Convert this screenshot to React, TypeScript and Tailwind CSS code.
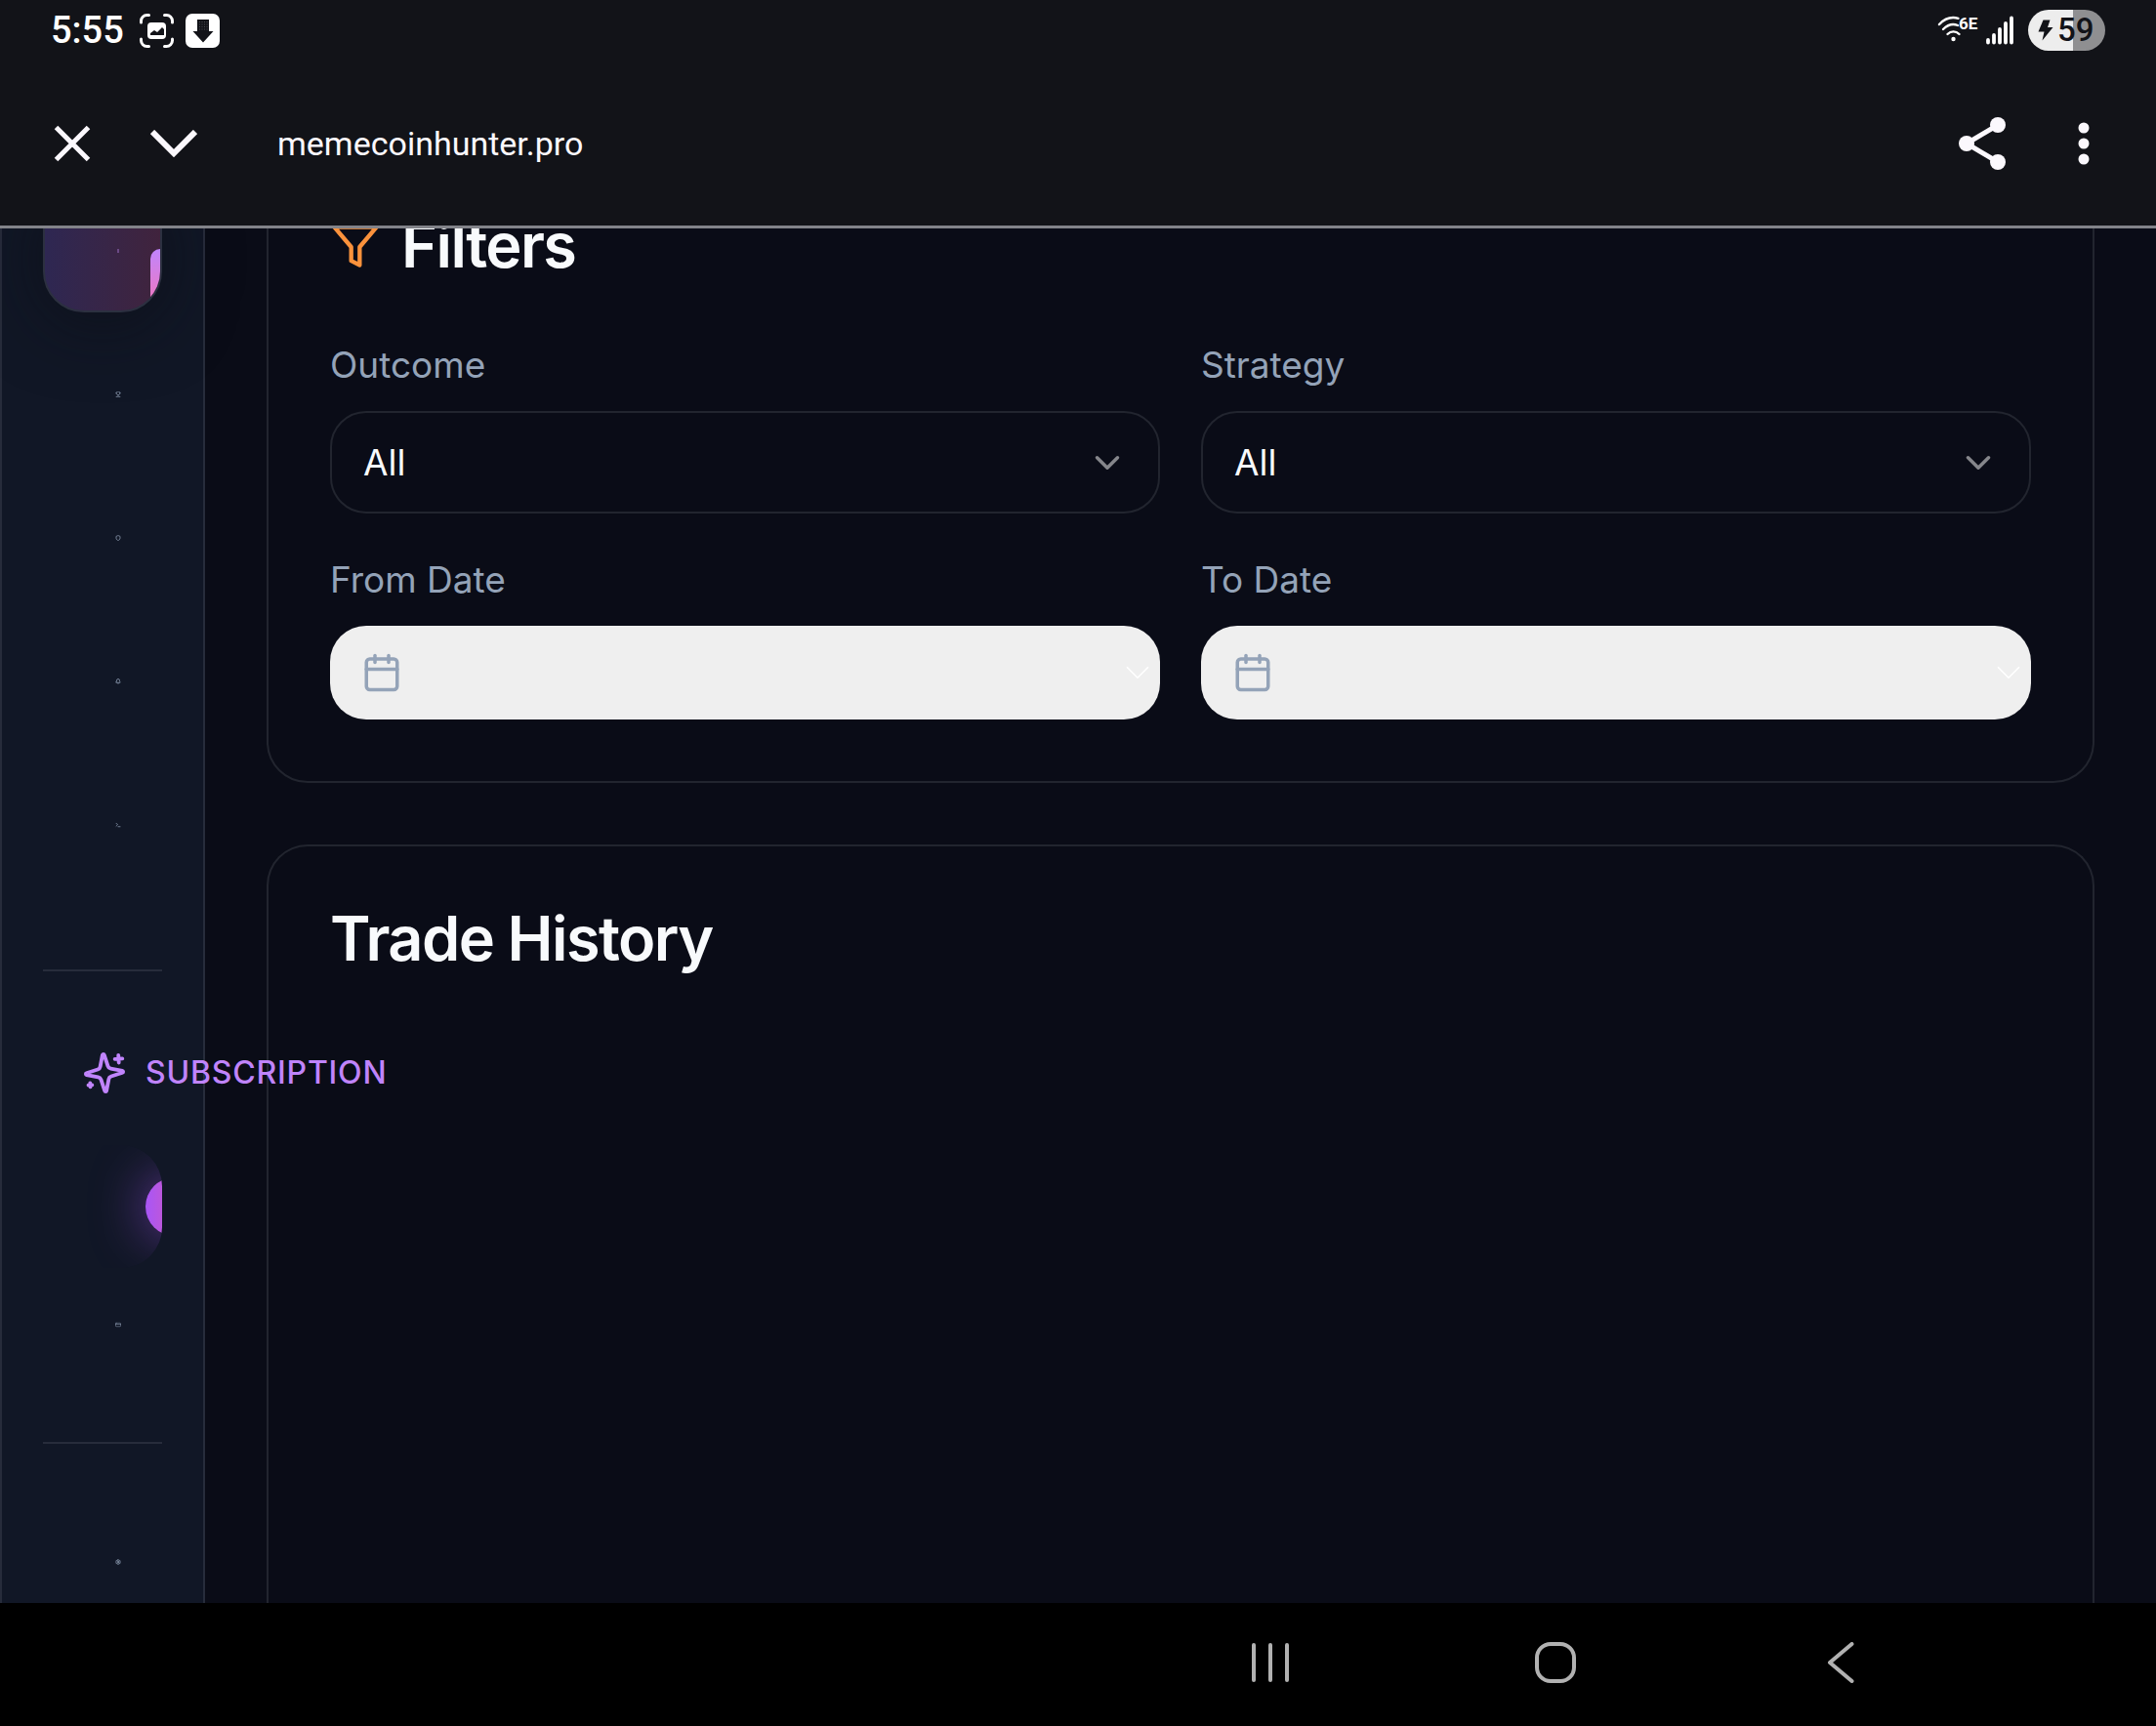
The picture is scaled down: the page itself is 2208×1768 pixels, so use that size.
import type { ReactNode } from "react";
import {
  Bell,
  Calendar,
  ChevronDown,
  CreditCard,
  Settings,
  Shield,
  Terminal,
  Trophy,
} from "lucide-react";

function StatusBar() {
  return (
    <div className="flex h-[62px] items-center justify-between px-[52px] text-white">
      <div className="flex items-center">
        <span className="w-[91px] font-[Roboto,sans-serif] text-[38px] leading-[60px] font-medium">5:55</span>
        <svg className="size-[35px]" viewBox="0 0 35 35" aria-hidden="true">
          <g fill="none" stroke="#fff" strokeWidth="3" strokeLinecap="round">
            <path d="M1.500 9V7.500a6 6 0 0 1 6-6H9.500M25.500 1.500H27.500a6 6 0 0 1 6 6V9M33.500 26v1.500a6 6 0 0 1-6 6H25.500M9.500 33.500H7.500a6 6 0 0 1-6-6V26" />
          </g>
          <rect x="8" y="9" width="19" height="17" rx="4" fill="#fff" />
          <path d="M11 22v-2l4-3 3 2 5-5 2 2v6z" fill="#121318" />
        </svg>
        <svg className="ml-3 size-[35px]" viewBox="0 0 35 35" aria-hidden="true">
          <rect width="35" height="35" rx="7" fill="#fff" />
          <path d="M12 6h12v12h4.500L18 29.500 7.500 18H12z" fill="#121318" />
          <path d="M14.500 8v10M17 8v10M19.500 8v10M22 8v10" stroke="#4a4b50" strokeWidth="1" strokeDasharray="1 1.500" />
        </svg>
      </div>
      <div className="flex items-center">
        <svg className="h-[32px] w-[44px]" viewBox="0 0 44 32" aria-hidden="true">
          <g fill="none" stroke="#fff" strokeWidth="2.400" strokeLinecap="round">
            <path d="M2 10C8 3.500 15 2 21.500 3.800" />
            <path d="M6 15c5-5 10-6 15-4" />
            <path d="M10.500 20c3.500-3.500 8.500-3.500 12 0" />
          </g>
          <circle cx="16.500" cy="25" r="2.200" fill="#fff" />
          <text x="22" y="15" fill="#fff" fontFamily="Roboto, sans-serif" fontSize="17" fontWeight="700">6E</text>
        </svg>
        <svg className="ml-[6px] h-[30px] w-[28px]" viewBox="0 0 28 30" aria-hidden="true">
          <g stroke="#fff" strokeWidth="3.800" strokeLinecap="round">
            <path d="M2 25v2.500M8 20v7.500M14 14v13.500M20 8v19.500M26 2.500v25" />
          </g>
        </svg>
        <div className="ml-[15px] flex h-[42px] w-[79px] items-center rounded-full bg-linear-to-r from-[#ededed] from-58% to-[#8f8f91] to-58% pl-[10px] text-[#121318]">
          <svg className="h-[22px] w-[16px]" viewBox="0 0 16 22" aria-hidden="true">
            <path d="M5.500 0.500h7L10 8h5.500L4.500 21.500 6.500 12.500H0.500z" fill="#121318" />
          </svg>
          <span className="ml-1 font-[Roboto,sans-serif] text-[33px] leading-[42px] font-medium">59</span>
        </div>
      </div>
    </div>
  );
}

function BrowserBar() {
  return (
    <header className="shrink-0 border-b-[3px] border-[#828389] bg-[#121318]">
      <StatusBar />
      <div className="flex h-[169px] items-center px-[50px] text-[#fbf8fd]">
        <button type="button" aria-label="Close" className="flex size-12 items-center justify-center">
          <svg className="size-[38px]" viewBox="0 0 38 38" aria-hidden="true">
            <path d="M2.500 2.500l33 33M35.500 2.500l-33 33" stroke="currentColor" strokeWidth="5" />
          </svg>
        </button>
        <button type="button" aria-label="Minimize" className="ml-14 flex size-12 items-center justify-center">
          <svg className="h-[28px] w-[48px]" viewBox="0 0 48 28" aria-hidden="true">
            <path d="M2 2l22 22L46 2" fill="none" stroke="currentColor" strokeWidth="6" />
          </svg>
        </button>
        <span className="ml-[82px] flex-1 font-[Roboto,sans-serif] text-[34px] leading-[48px]">memecoinhunter.pro</span>
        <button type="button" aria-label="Share" className="flex h-14 w-12 items-center justify-center">
          <svg className="h-[54px] w-[48px]" viewBox="0 0 48 54" aria-hidden="true">
            <path d="M40 8L8 27l32 19" fill="none" stroke="currentColor" strokeWidth="5" />
            <circle cx="40" cy="8" r="8" fill="currentColor" />
            <circle cx="8" cy="27" r="8" fill="currentColor" />
            <circle cx="40" cy="46" r="8" fill="currentColor" />
          </svg>
        </button>
        <button type="button" aria-label="More options" className="ml-14 flex size-12 items-center justify-center">
          <svg className="h-[44px] w-[12px]" viewBox="0 0 12 44" aria-hidden="true">
            <circle cx="6" cy="6" r="5.500" fill="currentColor" />
            <circle cx="6" cy="22" r="5.500" fill="currentColor" />
            <circle cx="6" cy="38" r="5.500" fill="currentColor" />
          </svg>
        </button>
      </div>
    </header>
  );
}

function RailLink({ label, children }: { label: string; children: ReactNode }) {
  return (
    <a href="#" aria-label={label} className="flex h-[126px] shrink-0 items-center justify-end pr-[42px] text-[#94a3b8]">
      {children}
    </a>
  );
}

function SparklesIcon() {
  return (
    <svg
      className="size-[46px] shrink-0"
      viewBox="0 0 24 24"
      fill="none"
      stroke="currentColor"
      strokeWidth="2"
      strokeLinecap="round"
      strokeLinejoin="round"
      aria-hidden="true"
    >
      <g transform="rotate(-3.600 12 12)">
        <path d="M9.937 15.500A2 2 0 0 0 8.500 14.063l-6.135-1.582a.5.5 0 0 1 0-.962L8.500 9.936A2 2 0 0 0 9.937 8.500l1.582-6.135a.5.5 0 0 1 .963 0L14.063 8.500A2 2 0 0 0 15.500 9.937l6.135 1.581a.5.5 0 0 1 0 .964L15.500 14.063a2 2 0 0 0-1.437 1.437l-1.582 6.135a.5.5 0 0 1-.963 0z" />
        <path d="M20 3v4M22 5h-4M4 17v2M5 18H3" />
      </g>
    </svg>
  );
}

function Sidebar() {
  return (
    <aside className="relative z-10 flex w-[210px] shrink-0 flex-col border-x-2 border-[#272c3b] bg-[#111726] px-[42px]">
      <nav className="-mt-10 flex shrink-0 flex-col gap-[21px]">
        <a
          href="#"
          aria-label="Trades"
          className="relative flex h-[126px] items-center justify-end overflow-hidden rounded-[42px] border-2 border-[#2c3040] bg-linear-to-r from-[#2e2752] to-[#40233d] pr-[42px] shadow-[0_8px_72px_rgba(12,14,20,0.6)]"
        >
          <span className="h-1 w-[2px] bg-[#6b4a86]" />
          <span className="absolute top-[59px] right-0 h-[63px] w-[10px] rounded-l-[10px] bg-linear-to-b from-[#c084fc] to-[#f472b6]" />
        </a>
        <RailLink label="Leaderboard"><Trophy size={6} /></RailLink>
        <RailLink label="Security"><Shield size={6} strokeWidth={3} /></RailLink>
        <RailLink label="Alerts"><Bell size={6} strokeWidth={3} /></RailLink>
        <RailLink label="Console"><Terminal size={6} strokeWidth={3} /></RailLink>
      </nav>
      <hr className="mt-[85px] shrink-0 border-t-2 border-[#272c3b]" />
      <div className="mt-[78px] flex h-[52px] shrink-0 items-center gap-[19px] pl-10 text-[#c084fc]">
        <SparklesIcon />
        <span className="text-[32px] leading-[42px] font-medium tracking-wide">SUBSCRIPTION</span>
      </div>
      <a href="#" aria-label="Upgrade" className="relative mt-12 block h-[126px] shrink-0 overflow-hidden rounded-[42px]">
        <span className="absolute top-[33px] left-[105px] size-[60px] rounded-full bg-linear-to-r from-[#a855f7] to-[#ec4899] shadow-[0_0_54px_rgba(168,85,247,0.6)]" />
      </a>
      <a href="#" aria-label="Billing" className="flex h-[116px] shrink-0 items-center justify-end pr-[42px] text-[#94a3b8]">
        <CreditCard size={6} />
      </a>
      <hr className="mt-[62px] shrink-0 border-t-2 border-[#272c3b]" />
      <div className="mt-[58px]">
        <RailLink label="Settings"><Settings size={6} strokeWidth={3} /></RailLink>
      </div>
    </aside>
  );
}

function SelectField({ id, label }: { id: string; label: string }) {
  return (
    <div className="flex flex-col gap-[21px]">
      <label htmlFor={id} className="text-[37px] leading-[52px] text-[#94a3b8]">{label}</label>
      <div className="relative">
        <select
          id={id}
          className="h-[105px] w-full appearance-none rounded-[37px] border-2 border-[#22252f] bg-transparent px-8 text-[37px] text-[#f8fafc]"
        >
          <option>All</option>
        </select>
        <ChevronDown className="pointer-events-none absolute top-8 right-[33px] size-[42px] text-[#85868b]" />
      </div>
    </div>
  );
}

function DateField({ id, label }: { id: string; label: string }) {
  return (
    <div className="flex flex-col gap-[21px]">
      <label htmlFor={id} className="text-[37px] leading-[52px] text-[#94a3b8]">{label}</label>
      <button id={id} type="button" className="flex h-24 w-full items-center justify-between rounded-[37px] bg-[#efefef] pr-0.5 pl-8">
        <Calendar className="size-[42px] text-[#94a3b8]" />
        <ChevronDown className="size-[42px] text-white" strokeWidth={1} />
      </button>
    </div>
  );
}

function Main() {
  return (
    <main className="flex min-w-0 flex-1 flex-col gap-[63px] px-[63px]">
      <section className="-mt-[79px] shrink-0 rounded-[42px] border-2 border-[#22252f] p-[63px]">
        <h2 className="flex items-center gap-[21px] text-[63px] leading-[63px] font-semibold tracking-tight text-[#f8fafc]">
          <svg className="size-[52px]" viewBox="0 0 24 24" fill="none" stroke="#fb923c" strokeWidth="2" strokeLinecap="round" strokeLinejoin="round" aria-hidden="true">
            <polygon points="22 3 2 3 10 12.460 10 19 14 21 14 12.460 22 3" />
          </svg>
          Filters
        </h2>
        <div className="mt-[65px] grid grid-cols-2 gap-[42px]">
          <SelectField id="outcome" label="Outcome" />
          <SelectField id="strategy" label="Strategy" />
          <DateField id="from-date" label="From Date" />
          <DateField id="to-date" label="To Date" />
        </div>
      </section>
      <section className="flex-1 rounded-t-[42px] border-2 border-b-0 border-[#22252f] p-[63px]">
        <h2 className="text-[63px] leading-[63px] font-semibold tracking-tight text-[#f8fafc]">Trade History</h2>
      </section>
    </main>
  );
}

function NavigationBar() {
  return (
    <nav className="flex h-[126px] shrink-0 items-center justify-end bg-black pr-[177px] pb-1 text-[#b1b1b1]">
      <button type="button" aria-label="Recent apps" className="flex h-full w-[292px] items-center justify-center">
        <svg className="h-[40px] w-[38px]" viewBox="0 0 38 40" aria-hidden="true">
          <path d="M2 2v36M19 2v36M36 2v36" stroke="currentColor" strokeWidth="4" strokeLinecap="round" />
        </svg>
      </button>
      <button type="button" aria-label="Home" className="flex h-full w-[292px] items-center justify-center">
        <span className="size-[42px] rounded-[16px] border-4 border-current" />
      </button>
      <button type="button" aria-label="Back" className="flex h-full w-[292px] items-center justify-center">
        <svg className="h-[42px] w-[28px]" viewBox="0 0 28 42" aria-hidden="true">
          <path d="M25.500 2L3 21l22.500 19" fill="none" stroke="currentColor" strokeWidth="4" strokeLinecap="round" strokeLinejoin="round" />
        </svg>
      </button>
    </nav>
  );
}

export default function App() {
  return (
    <div className="flex h-screen flex-col bg-[#0a0c17] font-[Inter,sans-serif]">
      <BrowserBar />
      <div className="flex min-h-0 flex-1 overflow-hidden">
        <Sidebar />
        <Main />
      </div>
      <NavigationBar />
    </div>
  );
}
